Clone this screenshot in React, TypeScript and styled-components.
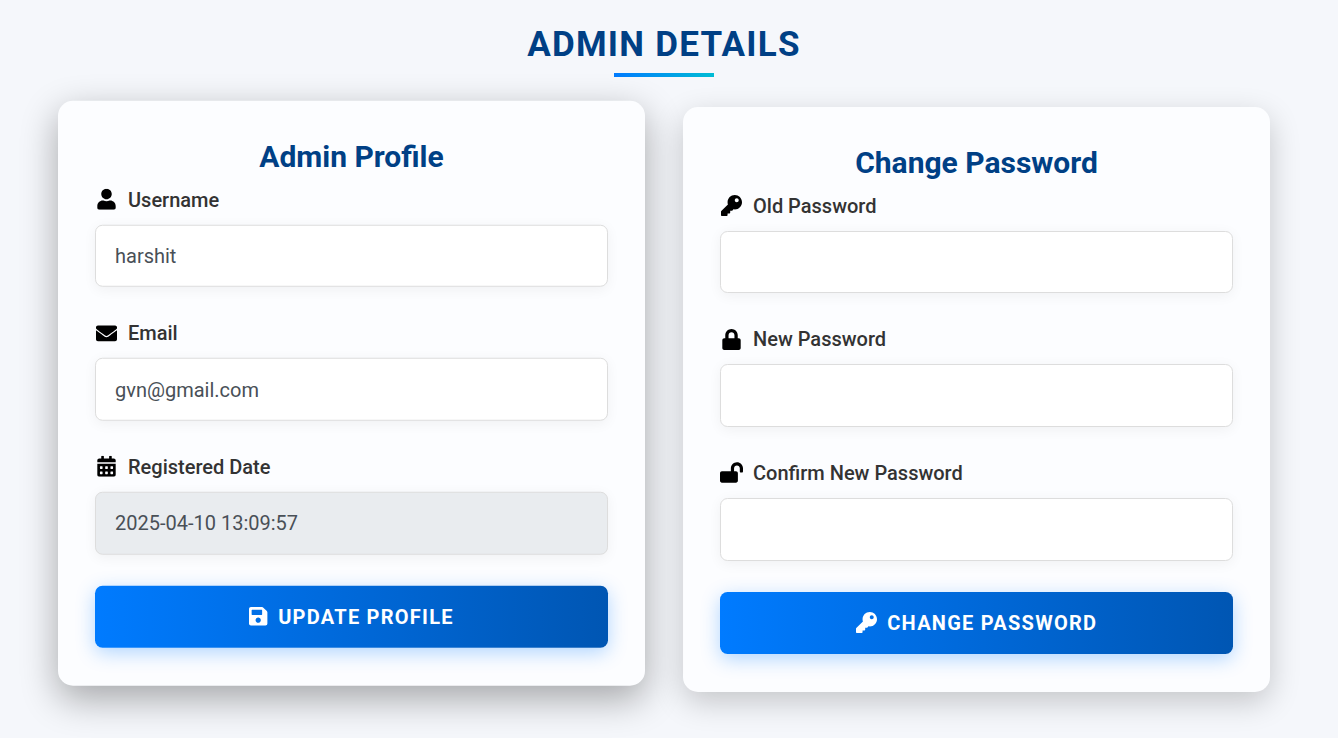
import React from 'react';
import styled, { createGlobalStyle } from 'styled-components';
import {
  FaUser,
  FaEnvelope,
  FaCalendarAlt,
  FaKey,
  FaLock,
  FaLockOpen,
  FaSave,
} from 'react-icons/fa';

const GlobalStyle = createGlobalStyle`
  *, *::before, *::after { box-sizing: border-box; }
  body {
    margin: 0;
    background: #f5f7fb;
    font-family: Roboto, "Liberation Sans", sans-serif;
    overflow: hidden;
  }
`;

const Page = styled.main`
  width: 1328px;
  height: 738px;
  padding-top: 24px;
  display: flex;
  flex-direction: column;
  align-items: center;
`;

const Title = styled.h1`
  margin: 0;
  line-height: 42px;
  font-size: 35px;
  font-weight: 700;
  letter-spacing: 1.25px;
  color: #004085;
  text-transform: uppercase;
`;

const Underline = styled.div`
  width: 100px;
  height: 4px;
  margin-top: 7px;
  background: linear-gradient(90deg, #007bff, #00bcd4);
`;

const Cards = styled.div`
  display: flex;
  gap: 38px;
  margin-top: 30px;
`;

const Card = styled.section<{ $raised?: boolean }>`
  width: 587px;
  height: 585px;
  padding: 38px 37px 37px;
  border-radius: 15px;
  background: #fcfdff;
  box-shadow: ${({ $raised }) =>
    $raised ? '0 12.5px 37.5px rgba(0, 0, 0, 0.33)' : '0 10px 31.25px rgba(0, 0, 0, 0.2)'};
  transform: ${({ $raised }) => ($raised ? 'translateY(-6.25px)' : 'none')};
`;

const CardTitle = styled.h2`
  margin: 0 0 9.75px;
  line-height: 36px;
  font-size: 30px;
  font-weight: 700;
  text-align: center;
  color: #004085;
`;

const Field = styled.div`
  margin-bottom: 31.02px;
`;

const Label = styled.label`
  display: flex;
  align-items: center;
  height: 30px;
  margin-bottom: 10px;
  font-size: 20px;
  font-weight: 500;
  color: #333;
`;

const IconSlot = styled.span<{ $iconWidth: number }>`
  display: flex;
  justify-content: center;
  width: 25px;
  margin: 0 9px 0 -1px;
  color: #000;

  svg {
    flex: none;
    width: ${({ $iconWidth }) => $iconWidth}px;
    height: 21px;
  }
`;

const Input = styled.input`
  display: block;
  width: 100%;
  height: 62.6px;
  padding: 0 19px;
  border: 1px solid #ddd;
  border-radius: 7.5px;
  background: #fff;
  box-shadow: 0 2.5px 12.5px rgba(0, 0, 0, 0.05);
  font-family: inherit;
  font-size: 20px;
  color: #495057;
  outline: none;

  &:read-only {
    background: #e9ecef;
  }
`;

const SubmitButton = styled.button<{ $iconWidth: number }>`
  display: flex;
  align-items: center;
  justify-content: center;
  gap: 10.5px;
  width: 100%;
  height: 62px;
  padding: 0;
  border: 0;
  border-radius: 7.5px;
  background: linear-gradient(90deg, #007bff, #0056b3);
  box-shadow: 0 5px 18.75px rgba(0, 123, 255, 0.3);
  font-family: inherit;
  font-size: 20px;
  font-weight: 700;
  letter-spacing: 1.25px;
  text-transform: uppercase;
  color: #fff;

  svg {
    flex: none;
    width: ${({ $iconWidth }) => $iconWidth}px;
    height: 21px;
  }
`;

interface FormFieldProps {
  id: string;
  label: string;
  icon: React.ReactNode;
  iconWidth?: number;
  type?: string;
  value?: string;
  readOnly?: boolean;
}

function FormField({ id, label, icon, iconWidth = 21, type = 'text', value, readOnly }: FormFieldProps) {
  return (
    <Field>
      <Label htmlFor={id}>
        <IconSlot $iconWidth={iconWidth}>{icon}</IconSlot>
        {label}
      </Label>
      <Input id={id} type={type} defaultValue={value} readOnly={readOnly} />
    </Field>
  );
}

export default function App() {
  return (
    <>
      <GlobalStyle />
      <Page>
        <Title>Admin Details</Title>
        <Underline />
        <Cards>
          <Card $raised>
            <CardTitle>Admin Profile</CardTitle>
            <FormField id="username" label="Username" icon={<FaUser />} value="harshit" />
            <FormField id="email" label="Email" icon={<FaEnvelope />} value="gvn@gmail.com" />
            <FormField
              id="registered"
              label="Registered Date"
              icon={<FaCalendarAlt />}
              value="2025-04-10 13:09:57"
              readOnly
            />
            <SubmitButton type="button" $iconWidth={18.4}>
              <FaSave />
              Update Profile
            </SubmitButton>
          </Card>
          <Card>
            <CardTitle>Change Password</CardTitle>
            <FormField id="old" label="Old Password" icon={<FaKey />} type="password" />
            <FormField id="new" label="New Password" icon={<FaLock />} type="password" />
            <FormField
              id="confirm"
              label="Confirm New Password"
              icon={<FaLockOpen />}
              iconWidth={23}
              type="password"
            />
            <SubmitButton type="button" $iconWidth={21}>
              <FaKey />
              Change Password
            </SubmitButton>
          </Card>
        </Cards>
      </Page>
    </>
  );
}
